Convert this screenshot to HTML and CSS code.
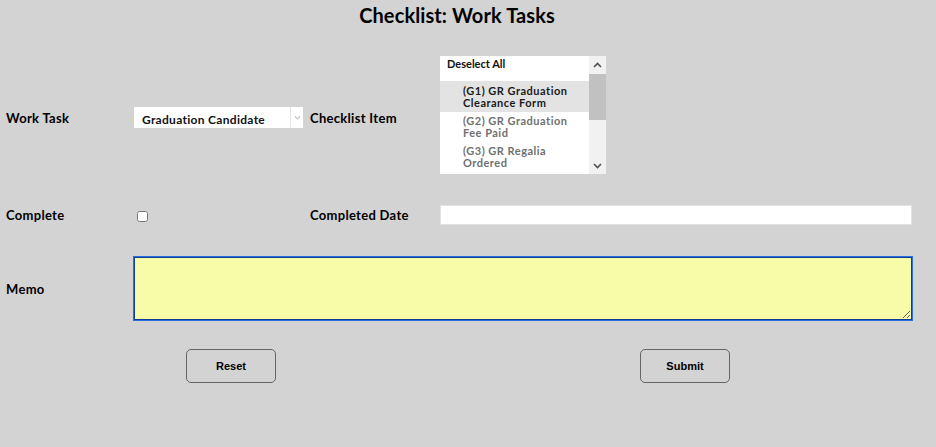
FILE: index.html
```html
<!DOCTYPE html>
<html lang="en">
<head>
    <meta charset="UTF-8">
    <meta name="viewport" content="width=device-width, initial-scale=1.0">
    <title>Checklist: Work Tasks</title>
    <link rel="stylesheet" href="styles.css">
</head>
<body>

<h1 class="title">Checklist: Work Tasks</h1>

<form id="checklistForm" class="task-form">

    <label class="field-label top-row" for="workTask">Work Task</label>
    <div class="select-box top-row">
        <select id="workTask" name="workTask">
            <option>Graduation Candidate</option>
        </select>
        <span class="select-arrow">
            <svg width="7" height="5" viewBox="0 0 7 5"><path d="M1 1.5 L3.5 3.8 L6 1.5" fill="none" stroke="#a0a0a0" stroke-width="1"/></svg>
        </span>
    </div>

    <label class="field-label top-row">Checklist Item</label>
    <div class="list-box">
        <div class="list-items">
            <div class="list-head">Deselect All</div>
            <div class="list-item selected">(G1) GR Graduation<br>Clearance Form</div>
            <div class="list-item">(G2) GR Graduation<br>Fee Paid</div>
            <div class="list-item">(G3) GR Regalia<br>Ordered</div>
        </div>
        <div class="scroll-bar">
            <span class="scroll-btn">
                <svg width="9" height="6" viewBox="0 0 9 6"><path d="M1 5 L4.5 1.5 L8 5" fill="none" stroke="#505050" stroke-width="1.6"/></svg>
            </span>
            <span class="scroll-thumb"></span>
            <span class="scroll-space"></span>
            <span class="scroll-btn">
                <svg width="9" height="6" viewBox="0 0 9 6"><path d="M1 1 L4.5 4.5 L8 1" fill="none" stroke="#505050" stroke-width="1.6"/></svg>
            </span>
        </div>
    </div>

    <label class="field-label" for="complete">Complete</label>
    <div class="check-cell">
        <input type="checkbox" id="complete" name="complete">
    </div>

    <label class="field-label" for="completedDate">Completed Date</label>
    <input type="text" id="completedDate" name="completedDate" class="date-input">

    <label class="field-label" for="memo">Memo</label>
    <textarea id="memo" name="memo" class="memo"></textarea>

</form>

<div class="buttons">
    <button type="reset" form="checklistForm">Reset</button>
    <button type="submit" form="checklistForm">Submit</button>
</div>

<script>
    document.getElementById("checklistForm").addEventListener("submit", function(event) {
        event.preventDefault();
    });

    // clicking an item in the list toggles its selection
    var items = document.querySelectorAll(".list-item");
    for (var i = 0; i < items.length; i++) {
        items[i].addEventListener("click", function() {
            this.classList.toggle("selected");
        });
    }

    document.querySelector(".list-head").addEventListener("click", function() {
        for (var i = 0; i < items.length; i++) {
            items[i].classList.remove("selected");
        }
    });
</script>

</body>
</html>
```

FILE: styles.css
```css
body {
    font-family: Lato, "Noto Sans", sans-serif;
    margin: 0;
    padding: 0;
    background-color: #d3d3d3;
    color: #000;
}

.title {
    font-size: 20px;
    font-weight: bold;
    text-align: center;
    margin: 0;
    height: 31px;
    line-height: 31px;
    padding-right: 22px;
    letter-spacing: 0.1px;
}

.task-form {
    display: grid;
    grid-template-columns: 128px 176px 130px 472px;
    grid-template-rows: 118px 20px 65px;
    row-gap: 31px;
    padding-left: 6px;
    margin-top: 25px;
}

.field-label {
    font-size: 13px;
    font-weight: bold;
    letter-spacing: 0.3px;
    align-self: center;
}

.top-row {
    margin-top: 5px;
}

.select-box {
    display: flex;
    align-self: center;
    width: 169px;
    height: 21px;
    background-color: #fff;
}

.select-box select {
    flex: 1;
    appearance: none;
    -webkit-appearance: none;
    border: none;
    background: transparent;
    font-family: Lato, "Noto Sans", sans-serif;
    font-size: 12px;
    font-weight: bold;
    letter-spacing: 0.3px;
    color: #111;
    padding: 3px 0 0 8px;
    outline: none;
}

.select-arrow {
    width: 12px;
    border-left: 1px solid #e4e4e4;
    display: flex;
    align-items: center;
    justify-content: center;
}

.list-box {
    display: flex;
    width: 166px;
    height: 118px;
    background-color: #fff;
    overflow: hidden;
}

.list-items {
    flex: 1;
    font-size: 11px;
    font-weight: bold;
    line-height: 12px;
    letter-spacing: 0.5px;
    white-space: nowrap;
}

.list-head {
    height: 25px;
    padding: 2px 0 0 7px;
    box-sizing: border-box;
    color: #111;
    letter-spacing: 0;
}

.list-item {
    padding: 3px 0 3px 23px;
    color: #707070;
    cursor: default;
}

.list-item.selected {
    background-color: #e3e3e3;
    color: #1a1a1a;
    padding-top: 4px;
    padding-bottom: 3px;
}

.scroll-bar {
    width: 17px;
    display: flex;
    flex-direction: column;
    background-color: #f1f1f1;
}

.scroll-btn {
    height: 17px;
    display: flex;
    align-items: center;
    justify-content: center;
}

.scroll-thumb {
    height: 46px;
    margin: 1px 0 0 0;
    background-color: #c1c1c1;
}

.scroll-space {
    flex: 1;
}

.check-cell {
    align-self: center;
    padding-top: 1px;
}

.check-cell input {
    margin: 0 0 0 3px;
    width: 11px;
    height: 11px;
}

.date-input {
    width: 472px;
    height: 20px;
    border: 1px solid #e2e2e2;
    background-color: #fff;
    box-sizing: border-box;
    margin: 0;
}

.memo {
    grid-column: 2 / 5;
    margin-left: -1px;
    height: 65px;
    width: 780px;
    box-sizing: border-box;
    border: 2px solid #0c3f95;
    outline: 1px solid #2a6fe0;
    outline-offset: -1px;
    background-color: #f8fba8;
    margin-top: 0;
    margin-bottom: 0;
}

.buttons {
    display: flex;
    gap: 364px;
    padding-left: 186px;
    margin-top: 28px;
}

button {
    width: 90px;
    height: 34px;
    font-family: "Liberation Sans", Arial, sans-serif;
    font-size: 11px;
    font-weight: bold;
    color: #000;
    background-color: #d3d3d3;
    border: 1px solid #666;
    border-radius: 5px;
    cursor: pointer;
}

button:hover {
    background-color: #c8c8c8;
}
```
